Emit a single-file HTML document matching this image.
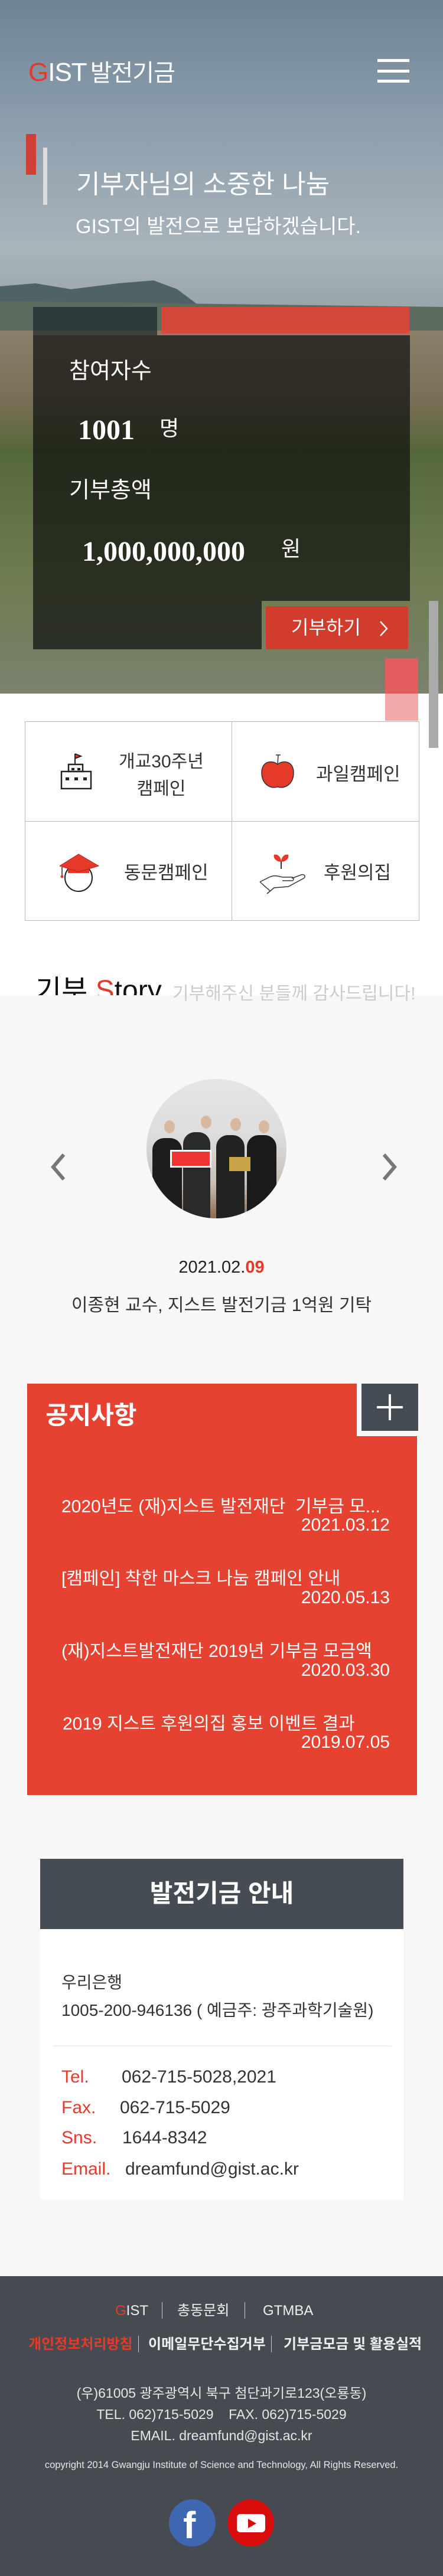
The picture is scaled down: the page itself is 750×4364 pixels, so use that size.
<!DOCTYPE html>
<html><head><meta charset="utf-8">
<style>
*{margin:0;padding:0;box-sizing:border-box}
body{width:750px;height:4364px;position:relative;background:#fff;font-family:"Liberation Sans","Noto Sans CJK KR",sans-serif;overflow:hidden}
.a{position:absolute;white-space:nowrap}
.hero{position:absolute;left:0;top:0;width:750px;height:1175px;overflow:hidden;
background:linear-gradient(180deg,#6d8497 0%,#8d9ead 18%,#a9b4bb 36%,#9aa6ab 44%,#4a5c5a 52%,#6b6a55 60%,#5c6a3e 70%,#6a7848 80%,#7e8a6a 90%,#8a8d7a 100%)}
.mtn{position:absolute;left:0;top:440px;width:750px;height:120px}
.w{color:#fff}
.cell{position:absolute;border:1px solid #bbb}
.nt{font-size:30px;color:#fff;position:absolute;white-space:nowrap}
</style></head><body>

<div class="hero">
  <svg class="mtn" viewBox="0 0 750 120" preserveAspectRatio="none">
    <path d="M0 45 L60 40 L120 50 L200 40 L260 35 L300 50 L340 80 L750 90 L750 120 L0 120Z" fill="#4f6366"/>
    <path d="M0 70 L750 80 L750 120 L0 120Z" fill="#5d6b5e"/>
  </svg>
  <div style="position:absolute;left:0;top:560px;width:750px;height:200px;background:linear-gradient(180deg,#8c7f6a,#7a6e56 60%,#59683a)"></div>
  <div style="position:absolute;left:0;top:760px;width:750px;height:415px;background:linear-gradient(180deg,#55683a,#6d7c4e 50%,#7b816e)"></div>
</div>

<!-- header -->
<div class="a" style="left:48px;top:98px;font-size:44px;line-height:50px;color:#fff;letter-spacing:-1px"><span style="color:#e53a2a">G</span>IST<span style="font-size:40px;margin-left:6px">발전기금</span></div>
<div class="a" style="left:639px;top:100px;width:54px;height:5px;background:#fff"></div>
<div class="a" style="left:639px;top:118px;width:54px;height:5px;background:#fff"></div>
<div class="a" style="left:639px;top:135px;width:54px;height:5px;background:#fff"></div>

<div class="a" style="left:44px;top:227px;width:17px;height:69px;background:#cf3f38"></div>
<div class="a" style="left:73px;top:250px;width:7px;height:97px;background:#ddd"></div>
<div class="a w" style="left:129px;top:286px;font-size:44px;line-height:54px">기부자님의 소중한 나눔</div>
<div class="a w" style="left:128px;top:364px;font-size:34px;line-height:40px">GIST의 발전으로 보답하겠습니다.</div>

<!-- stats box -->
<div class="a" style="left:56px;top:520px;width:210px;height:48px;background:rgba(20,30,35,.65)"></div>
<div class="a" style="left:273px;top:520px;width:420px;height:45px;background:rgba(225,70,55,.9)"></div>
<div class="a" style="left:56px;top:568px;width:638px;height:450px;background:rgba(10,12,12,.68)"></div>
<div class="a" style="left:56px;top:1018px;width:387px;height:82px;background:rgba(10,12,12,.68)"></div>
<div class="a w" style="left:117px;top:606px;font-size:38px;line-height:46px">참여자수</div>
<div class="a w" style="left:132px;top:702px;font-size:48px;line-height:54px;font-family:'Liberation Serif',serif;font-weight:bold">1001</div>
<div class="a w" style="left:270px;top:702px;font-size:36px;line-height:48px">명</div>
<div class="a w" style="left:117px;top:808px;font-size:38px;line-height:46px">기부총액</div>
<div class="a w" style="left:139px;top:908px;font-size:48px;line-height:54px;font-family:'Liberation Serif',serif;font-weight:bold">1,000,000,000</div>
<div class="a w" style="left:476px;top:906px;font-size:36px;line-height:48px">원</div>
<div class="a" style="left:450px;top:1027px;width:241px;height:73px;background:#d23c2c"></div>
<div class="a w" style="left:493px;top:1043px;font-size:32px;line-height:40px">기부하기</div>
<svg class="a" style="left:640px;top:1050px" width="20" height="30" viewBox="0 0 20 30"><path d="M4 3 L15 15 L4 27" stroke="#fff" stroke-width="2.5" fill="none"/></svg>

<div class="a" style="left:652px;top:1115px;width:56px;height:106px;background:#f2a9a9"></div>
<div class="a" style="left:652px;top:1115px;width:56px;height:60px;background:rgba(220,70,70,.75)"></div>
<div class="a" style="left:726px;top:1018px;width:16px;height:249px;background:#aaa"></div>

<!-- grid -->
<div class="cell" style="left:42px;top:1222px;width:351px;height:170px"></div>
<div class="cell" style="left:392px;top:1222px;width:318px;height:170px"></div>
<div class="cell" style="left:42px;top:1391px;width:351px;height:169px"></div>
<div class="cell" style="left:392px;top:1391px;width:318px;height:169px"></div>

<svg class="a" style="left:101px;top:1275px" width="56" height="64" viewBox="0 0 56 64">
<path d="M26 2 L26 20 M26 2 L36 6 L26 10" stroke="#222" stroke-width="2" fill="#e53a2a"/>
<rect x="15" y="20" width="24" height="12" fill="none" stroke="#222" stroke-width="2.5"/>
<rect x="3" y="32" width="50" height="29" fill="none" stroke="#222" stroke-width="2.5"/>
<rect x="20" y="26" width="5" height="4" fill="#222"/><rect x="30" y="26" width="5" height="4" fill="#222"/>
<rect x="10" y="42" width="6" height="5" fill="#222"/><rect x="25" y="42" width="6" height="5" fill="#222"/><rect x="40" y="42" width="6" height="5" fill="#222"/>
</svg>
<div class="a" style="left:193px;top:1268px;width:160px;text-align:center;font-size:30px;line-height:46px;color:#333">개교30주년<br>캠페인</div>

<svg class="a" style="left:441px;top:1275px" width="58" height="64" viewBox="0 0 58 64">
<path d="M29 20 L30 4 M26 4 L34 4" stroke="#333" stroke-width="1.5" fill="none"/>
<path d="M29 20 C20 12 2 14 2 34 C2 52 15 62 29 58 C43 62 56 52 56 34 C56 14 38 12 29 20Z" fill="#e53a2a" stroke="#333" stroke-width="1.5"/>
</svg>
<div class="a" style="left:535px;top:1290px;font-size:31px;line-height:44px;color:#333">과일캠페인</div>

<svg class="a" style="left:101px;top:1443px" width="70" height="74" viewBox="0 0 70 74">
<circle cx="32" cy="44" r="23" fill="#fff" stroke="#222" stroke-width="2"/>
<path d="M14 36 L14 26 L50 26 L50 36Z" fill="#e53a2a"/>
<path d="M0 24 L32 4 L66 24 L32 34Z" fill="#e53a2a" stroke="#b22" stroke-width="1"/>
<path d="M4 26 L4 40" stroke="#222" stroke-width="1.5"/><circle cx="4" cy="42" r="2.5" fill="#e53a2a"/>
</svg>
<div class="a" style="left:210px;top:1457px;font-size:31px;line-height:44px;color:#333">동문캠페인</div>

<svg class="a" style="left:438px;top:1440px" width="80" height="76" viewBox="0 0 80 76">
<path d="M38 32 L38 18" stroke="#333" stroke-width="2"/>
<path d="M38 20 C30 20 24 14 26 8 C32 6 38 12 38 20Z" fill="#e53a2a"/>
<path d="M38 20 C46 20 52 14 50 8 C44 6 38 12 38 20Z" fill="#e53a2a"/>
<path d="M2 54 L18 46 C26 42 32 44 40 46 L56 46 C60 46 60 52 56 52 L40 52 M56 48 L72 42 C78 40 80 46 76 48 L50 62 L26 64 L14 74" stroke="#333" stroke-width="1.5" fill="none"/>
<path d="M2 54 L20 70" stroke="#333" stroke-width="1.5"/>
</svg>
<div class="a" style="left:548px;top:1457px;font-size:31px;line-height:44px;color:#333">후원의집</div>

<!-- story -->
<div class="a" style="left:60px;top:1650px;height:36px;overflow:hidden;font-size:48px;line-height:58px;color:#111">기부 <span style="color:#e53a2a">S</span>tory</div>
<div class="a" style="left:0;top:1686px;width:750px;height:2170px;background:#f7f7f7"></div>
<div class="a" style="left:292px;top:1666px;font-size:30px;line-height:36px;color:#ccc">기부해주신 분들께 감사드립니다!</div>

<div class="a" style="left:248px;top:1828px;width:237px;height:236px;border-radius:50%;overflow:hidden;background:linear-gradient(180deg,#e8e4e4 0%,#ddd 40%,#c8c0b8 75%,#8a6a50 100%)">
  <div style="position:absolute;left:10px;top:100px;width:50px;height:140px;background:#1d1d1d;border-radius:20px 20px 0 0"></div>
  <div style="position:absolute;left:62px;top:90px;width:46px;height:150px;background:#2a2a2a;border-radius:20px 20px 0 0"></div>
  <div style="position:absolute;left:118px;top:95px;width:48px;height:145px;background:#222;border-radius:20px 20px 0 0"></div>
  <div style="position:absolute;left:170px;top:95px;width:50px;height:145px;background:#1a1a1a;border-radius:20px 20px 0 0"></div>
  <div style="position:absolute;left:40px;top:120px;width:70px;height:30px;background:#e33;border:3px solid #fff"></div>
  <div style="position:absolute;left:140px;top:132px;width:36px;height:24px;background:#c9a548"></div>
  <div style="position:absolute;left:30px;top:70px;width:18px;height:22px;background:#d9b8a0;border-radius:50%"></div>
  <div style="position:absolute;left:92px;top:62px;width:18px;height:22px;background:#d9b8a0;border-radius:50%"></div>
  <div style="position:absolute;left:142px;top:66px;width:18px;height:22px;background:#d9b8a0;border-radius:50%"></div>
  <div style="position:absolute;left:190px;top:70px;width:18px;height:22px;background:#d9b8a0;border-radius:50%"></div>
</div>
<svg class="a" style="left:82px;top:1952px" width="32" height="50" viewBox="0 0 32 50"><path d="M26 4 L8 25 L26 46" stroke="#777" stroke-width="6" fill="none"/></svg>
<svg class="a" style="left:644px;top:1952px" width="32" height="50" viewBox="0 0 32 50"><path d="M6 4 L24 25 L6 46" stroke="#777" stroke-width="6" fill="none"/></svg>
<div class="a" style="left:0;width:750px;text-align:center;top:2129px;font-size:29px;line-height:36px;color:#222">2021.02.<span style="color:#e53a2a;font-weight:bold">09</span></div>
<div class="a" style="left:0;width:750px;text-align:center;top:2193px;font-size:30px;line-height:38px;color:#333">이종현 교수, 지스트 발전기금 1억원 기탁</div>

<!-- notices -->
<div class="a" style="left:46px;top:2344px;width:660px;height:697px;background:#e54232"></div>
<div class="a" style="left:604px;top:2344px;width:104px;height:89px;background:#f7f7f7"></div>
<div class="a" style="left:612px;top:2344px;width:96px;height:80px;background:#464c53"></div>
<div class="a" style="left:638px;top:2382px;width:44px;height:4px;background:#fff"></div>
<div class="a" style="left:658px;top:2362px;width:4px;height:44px;background:#fff"></div>
<div class="a w" style="left:77px;top:2372px;font-size:42px;line-height:52px;font-weight:bold">공지사항</div>
<div class="nt" style="left:104px;top:2527px">2020년도 (재)지스트 발전재단&nbsp; 기부금 모...</div>
<div class="nt" style="right:90px;top:2567px">2021.03.12</div>
<div class="nt" style="left:104px;top:2649px">[캠페인] 착한 마스크 나눔 캠페인 안내</div>
<div class="nt" style="right:90px;top:2690px">2020.05.13</div>
<div class="nt" style="left:104px;top:2772px">(재)지스트발전재단 2019년 기부금 모금액</div>
<div class="nt" style="right:90px;top:2813px">2020.03.30</div>
<div class="nt" style="left:106px;top:2895px">2019 지스트 후원의집 홍보 이벤트 결과</div>
<div class="nt" style="right:90px;top:2935px">2019.07.05</div>

<!-- info -->
<div class="a" style="left:68px;top:3149px;width:615px;height:119px;background:#464c53"></div>
<div class="a w" style="left:68px;width:615px;text-align:center;top:3180px;font-size:42px;line-height:56px;font-weight:bold">발전기금 안내</div>
<div class="a" style="left:68px;top:3268px;width:615px;height:458px;background:#fff"></div>
<div class="a" style="left:104px;top:3340px;font-size:28px;line-height:38px;color:#333">우리은행</div>
<div class="a" style="left:104px;top:3387px;font-size:28px;line-height:38px;color:#333">1005-200-946136 ( 예금주: 광주과학기술원)</div>
<div class="a" style="left:90px;top:3465px;width:573px;height:2px;background:#eee"></div>
<div class="a" style="left:104px;top:3500px;font-size:30px;line-height:38px;color:#e53a2a">Tel.</div>
<div class="a" style="left:206px;top:3500px;font-size:30px;line-height:38px;color:#333">062-715-5028,2021</div>
<div class="a" style="left:104px;top:3552px;font-size:30px;line-height:38px;color:#e53a2a">Fax.</div>
<div class="a" style="left:203px;top:3552px;font-size:30px;line-height:38px;color:#333">062-715-5029</div>
<div class="a" style="left:104px;top:3603px;font-size:30px;line-height:38px;color:#e53a2a">Sns.</div>
<div class="a" style="left:207px;top:3603px;font-size:30px;line-height:38px;color:#333">1644-8342</div>
<div class="a" style="left:104px;top:3656px;font-size:30px;line-height:38px;color:#e53a2a">Email.</div>
<div class="a" style="left:212px;top:3656px;font-size:30px;line-height:38px;color:#333">dreamfund@gist.ac.kr</div>

<!-- footer -->
<div class="a" style="left:0;top:3856px;width:750px;height:508px;background:#464b52"></div>
<div class="a" style="left:195px;top:3900px;font-size:24px;line-height:30px;color:#eee"><span style="color:#e53a2a">G</span>IST</div>
<div class="a" style="left:274px;top:3900px;width:1px;height:28px;background:#ccc"></div>
<div class="a" style="left:300px;top:3900px;font-size:24px;line-height:30px;color:#eee">총동문회</div>
<div class="a" style="left:414px;top:3900px;width:1px;height:28px;background:#ccc"></div>
<div class="a" style="left:445px;top:3900px;font-size:24px;line-height:30px;color:#eee">GTMBA</div>
<div class="a" style="left:48px;top:3957px;font-size:24px;line-height:30px;color:#e53a2a;font-weight:bold">개인정보처리방침</div>
<div class="a" style="left:234px;top:3957px;width:1px;height:28px;background:#ccc"></div>
<div class="a" style="left:251px;top:3957px;font-size:24px;line-height:30px;color:#eee;font-weight:bold">이메일무단수집거부</div>
<div class="a" style="left:459px;top:3957px;width:1px;height:28px;background:#ccc"></div>
<div class="a" style="left:480px;top:3957px;font-size:24px;line-height:30px;color:#eee;font-weight:bold">기부금모금 및 활용실적</div>
<div class="a" style="left:0;width:750px;text-align:center;top:4036px;font-size:23px;line-height:36px;color:#e6e6e6;white-space:normal">(우)61005 광주광역시 북구 첨단과기로123(오룡동)<br>TEL. 062)715-5029&nbsp;&nbsp;&nbsp; FAX. 062)715-5029<br>EMAIL. dreamfund@gist.ac.kr</div>
<div class="a" style="left:0;width:750px;text-align:center;top:4164px;font-size:16.5px;line-height:24px;color:#e6e6e6">copyright 2014 Gwangju Institute of Science and Technology, All Rights Reserved.</div>
<div class="a" style="left:286px;top:4234px;width:79px;height:80px;border-radius:50%;background:#3f66b0"></div>
<div class="a" style="left:310px;top:4242px;font-size:64px;line-height:72px;color:#fff;font-weight:bold;font-family:'Liberation Sans',sans-serif">f</div>
<div class="a" style="left:385px;top:4234px;width:79px;height:80px;border-radius:50%;background:#d90c0c"></div>
<div class="a" style="left:401px;top:4259px;width:48px;height:31px;border-radius:6px;background:#fff"></div>
<svg class="a" style="left:418px;top:4265px" width="18" height="20" viewBox="0 0 18 20"><path d="M2 2 L16 10 L2 18Z" fill="#d90c0c"/></svg>
</body></html>
